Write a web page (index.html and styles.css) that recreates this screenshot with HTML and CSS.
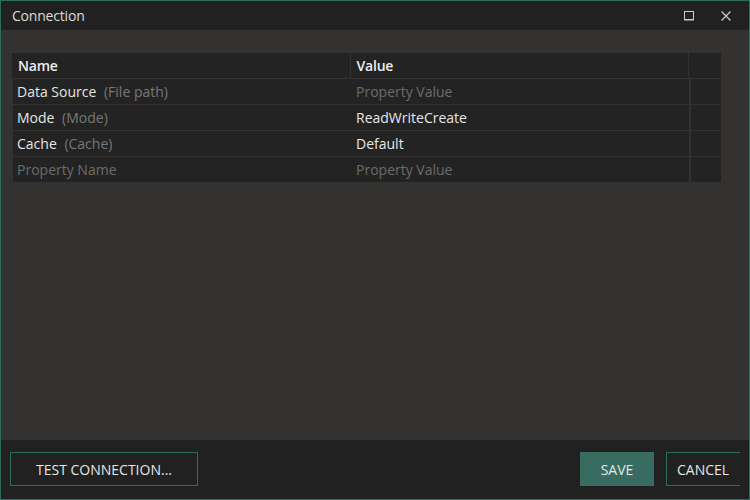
FILE: index.html
```html
<!DOCTYPE html>
<html lang="en">
<head>
  <meta charset="UTF-8" />
  <title>Connection</title>
  <link rel="stylesheet" href="styles.css">
</head>
<body>
  <div class="window">
    <div class="titlebar">
      <span class="title">Connection</span>
      <div class="title-buttons">
        <svg class="ctl" width="12" height="12" viewBox="0 0 12 12"><rect x="1.5" y="1.5" width="9" height="8" fill="none" stroke="#ccc" stroke-width="1"/><line x1="1" y1="10" x2="11" y2="10" stroke="#ccc" stroke-width="1"/></svg>
        <svg class="ctl" width="12" height="12" viewBox="0 0 12 12"><path d="M1.5 1.5 L10.5 10.5 M10.5 1.5 L1.5 10.5" stroke="#ccc" stroke-width="1.2"/></svg>
      </div>
    </div>

    <div class="content">
      <div class="props">
        <div class="head">
          <div class="hcell name-col">Name</div>
          <div class="hcell value-col">Value</div>
          <div class="hcell extra"></div>
        </div>
        <div class="row">
          <div class="cell">
            <span class="name-col">Data Source <span class="hint">(File path)</span></span>
            <span class="value-col placeholder">Property Value</span>
          </div>
          <div class="extra"></div>
        </div>
        <div class="row">
          <div class="cell">
            <span class="name-col">Mode <span class="hint">(Mode)</span></span>
            <span class="value-col">ReadWriteCreate</span>
          </div>
          <div class="extra"></div>
        </div>
        <div class="row">
          <div class="cell">
            <span class="name-col">Cache <span class="hint">(Cache)</span></span>
            <span class="value-col">Default</span>
          </div>
          <div class="extra"></div>
        </div>
        <div class="row">
          <div class="cell">
            <span class="name-col placeholder">Property Name</span>
            <span class="value-col placeholder">Property Value</span>
          </div>
          <div class="extra"></div>
        </div>
      </div>
    </div>

    <div class="footer">
      <button class="btn outline">TEST CONNECTION...</button>
      <div class="right">
        <button class="btn primary">SAVE</button>
        <button class="btn outline cancel">CANCEL</button>
      </div>
    </div>
  </div>
</body>
</html>
```

FILE: styles.css
```css
* {
  margin: 0;
  padding: 0;
  box-sizing: border-box;
}

body {
  background: #222;
  font-family: "Open Sans", "Noto Sans", sans-serif;
  color: #e6e6e6;
}

.window {
  width: 750px;
  height: 500px;
  border: 1px solid #2c6d5e;
  display: flex;
  flex-direction: column;
  background: #333230;
  overflow: hidden;
}

.titlebar {
  height: 29px;
  background: #212121;
  display: flex;
  align-items: center;
  justify-content: space-between;
  padding: 0 17px 0 11px;
}

.title {
  font-size: 14px;
  color: #dcdcdc;
  letter-spacing: -0.2px;
}

.title-buttons {
  display: flex;
  gap: 25px;
  align-items: center;
}

.content {
  flex: 1;
  padding: 23px 28px 0 11px;
}

.props {
  display: flex;
  flex-direction: column;
  gap: 1px;
  font-size: 14px;
}

.head, .row {
  display: flex;
  height: 25px;
  gap: 1px;
}

.row .cell, .hcell, .extra {
  background: #232323;
}

.hcell {
  display: flex;
  align-items: center;
  font-weight: 600;
  color: #eee;
  letter-spacing: -0.2px;
}

.head .name-col {
  width: 338px;
  padding-left: 6px;
}

.head .value-col {
  width: 338px;
  padding-left: 6px;
}

.extra {
  width: 31px;
}

.head .extra {
  width: 32px;
}

.row .cell {
  margin-left: 1px;
  width: 676px;
  display: flex;
  align-items: center;
}

.row .extra {
  margin-left: 1px;
  width: 30px;
}

.row .name-col {
  width: 340px;
  padding-left: 4px;
}

.row .value-col {
  padding-left: 3px;
}

.hint {
  color: #777;
  margin-left: 4px;
}

.placeholder {
  color: #6c6c6c;
}

.footer {
  height: 59px;
  background: #212121;
  display: flex;
  align-items: flex-start;
  justify-content: space-between;
  padding: 12px 9px 0 9px;
}

.right {
  display: flex;
  gap: 12px;
}

.btn {
  height: 34px;
  font-family: "Open Sans", "Noto Sans", sans-serif;
  font-size: 14px;
  color: #e6e6e6;
  background: transparent;
  border: 1px solid #2c6d5e;
}

.btn.outline {
  width: 188px;
}

.btn.primary {
  width: 74px;
  background: #386c60;
  border-color: #386c60;
}

.btn.cancel {
  width: 74px;
  border-right: none;
  text-align: left;
  padding-left: 10px;
  white-space: nowrap;
  overflow: hidden;
}
```
